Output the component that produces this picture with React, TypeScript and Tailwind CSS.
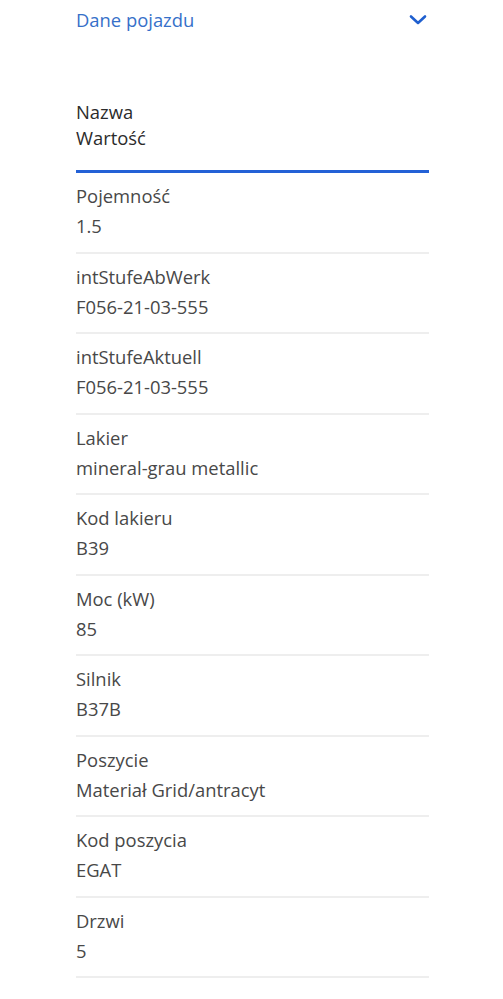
const rows: [string, string][] = [
  ["Pojemność", "1.5"],
  ["intStufeAbWerk", "F056-21-03-555"],
  ["intStufeAktuell", "F056-21-03-555"],
  ["Lakier", "mineral-grau metallic"],
  ["Kod lakieru", "B39"],
  ["Moc (kW)", "85"],
  ["Silnik", "B37B"],
  ["Poszycie", "Materiał Grid/antracyt"],
  ["Kod poszycia", "EGAT"],
  ["Drzwi", "5"],
];

const App = () => {
  return (
    <div className="min-h-screen bg-white font-['Open_Sans','Lato',sans-serif] text-[18.4px] leading-[26px]">
      <div className="ml-[76px] w-[353px]">
        <div className="pt-[7px] flex items-center justify-between">
          <span className="text-[#3670c9]">Dane pojazdu</span>
          <svg width="18" height="12" viewBox="0 0 18 12" className="mr-[2px]">
            <path d="M2 2.5 L9 9 L16 2.5" fill="none" stroke="#1f5fcf" strokeWidth="2.6" strokeLinecap="round" strokeLinejoin="round" />
          </svg>
        </div>

        <div className="mt-[66px] text-[#2b2b2b]">
          <div>Nazwa</div>
          <div>Wartość</div>
        </div>
        <div className="mt-[19px] h-[3px] bg-[#2361d6]" />

        {rows.map(([label, value], i) => (
          <div key={i} className="pt-[10px] pb-[11.5px] border-b-2 border-[#eeeeee] text-[#484848]">
            <div>{label}</div>
            <div className="mt-[4px] mb-[1px]">{value}</div>
          </div>
        ))}
      </div>
    </div>
  );
};

export default App;
